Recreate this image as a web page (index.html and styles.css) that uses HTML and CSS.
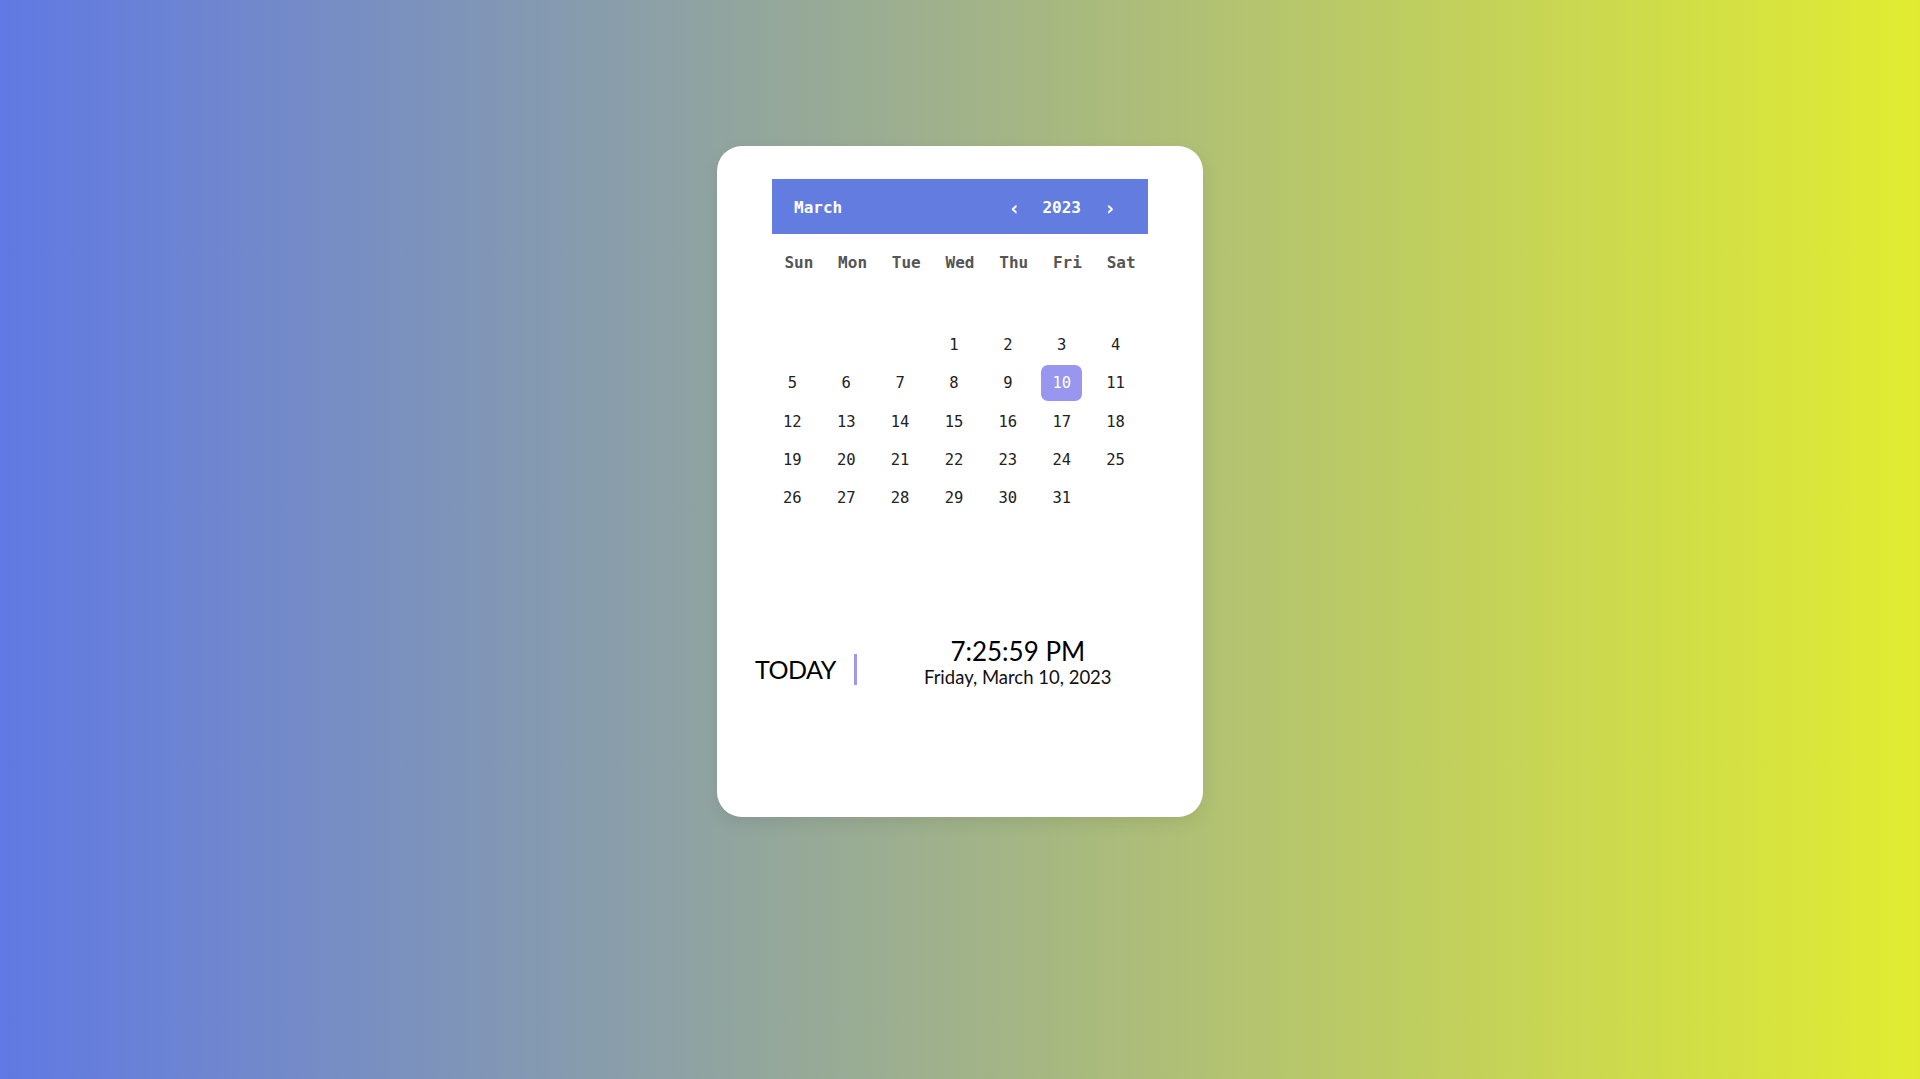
FILE: index.html
```html
<!DOCTYPE html>
<html lang="en">
<head>
<meta charset="utf-8">
<title>Calendar</title>
<link rel="stylesheet" href="styles.css">
</head>
<body>
<div class="card">
  <div class="cal-header">
    <span class="month">March</span>
    <div class="nav">
      <span class="chev">&lsaquo;</span>
      <span class="year">2023</span>
      <span class="chev chev-r">&rsaquo;</span>
    </div>
  </div>
  <div class="weekdays">
    <span>Sun</span><span>Mon</span><span>Tue</span><span>Wed</span><span>Thu</span><span>Fri</span><span>Sat</span>
  </div>
  <div class="days">
    <span></span><span></span><span></span>
    <span>1</span><span>2</span><span>3</span><span>4</span>
    <span>5</span><span>6</span><span>7</span><span>8</span><span>9</span><span class="active">10</span><span>11</span>
    <span>12</span><span>13</span><span>14</span><span>15</span><span>16</span><span>17</span><span>18</span>
    <span>19</span><span>20</span><span>21</span><span>22</span><span>23</span><span>24</span><span>25</span>
    <span>26</span><span>27</span><span>28</span><span>29</span><span>30</span><span>31</span>
  </div>
  <div class="today">
    <span class="today-label">TODAY</span>
    <span class="bar"></span>
    <div class="now">
      <div class="time">7:25:59 PM</div>
      <div class="date">Friday, March 10, 2023</div>
    </div>
  </div>
</div>
</body>
</html>
```
FILE: styles.css
```css
html, body {
  margin: 0;
  padding: 0;
}
body {
  height: 1079px;
  background: linear-gradient(to right, #6079e3, #e1ec31);
  overflow: hidden;
}
.card {
  box-sizing: border-box;
  width: 486px;
  height: 671px;
  margin: 146px auto 0;
  background: #fff;
  border-radius: 25px;
  padding: 33px 55px 0;
  box-shadow: 0 6px 18px rgba(0, 0, 0, 0.08);
}
.cal-header {
  box-sizing: border-box;
  height: 55px;
  background: #627ddf;
  display: flex;
  align-items: center;
  justify-content: space-between;
  padding: 2px 28px 0 22px;
  color: #fff;
  font-family: "DejaVu Sans Mono", "Liberation Mono", monospace;
  font-weight: bold;
  font-size: 16px;
}
.nav {
  display: flex;
  align-items: center;
}
.chev {
  width: 20px;
  text-align: center;
  font-size: 19px;
  margin-right: 18px;
}
.chev-r {
  margin-right: 0;
  margin-left: 19px;
}
.weekdays {
  display: grid;
  grid-template-columns: repeat(7, 1fr);
  margin-top: 19px;
  height: 20px;
  line-height: 20px;
  text-align: center;
  font-family: "DejaVu Sans Mono", "Liberation Mono", monospace;
  font-weight: bold;
  font-size: 16px;
  color: #555;
}
.days {
  display: grid;
  grid-template-columns: repeat(7, 40.7px);
  grid-auto-rows: 36px;
  column-gap: 13.2px;
  row-gap: 2.33px;
  margin-top: 54px;
  font-family: "DejaVu Sans Mono", "Liberation Mono", monospace;
  font-size: 15.5px;
  color: #222;
}
.days span {
  display: flex;
  align-items: center;
  justify-content: center;
  border-radius: 7px;
}
.days .active {
  background: #9896ee;
  color: #fff;
}
.today {
  display: flex;
  align-items: flex-end;
  margin: 120px -55px 0;
  padding-left: 38px;
  font-family: Lato, "Open Sans", sans-serif;
  color: #000;
}
.today-label {
  font-size: 25px;
  line-height: 31px;
  letter-spacing: -0.5px;
}
.bar {
  width: 3px;
  height: 31px;
  background: #9b9aee;
  margin-left: 18px;
}
.now {
  width: 240px;
  margin-left: 41px;
  margin-bottom: -3px;
  text-align: center;
}
.time {
  font-size: 26px;
  line-height: 30px;
}
.date {
  font-size: 18.5px;
  line-height: 22px;
  color: #111;
}
```
